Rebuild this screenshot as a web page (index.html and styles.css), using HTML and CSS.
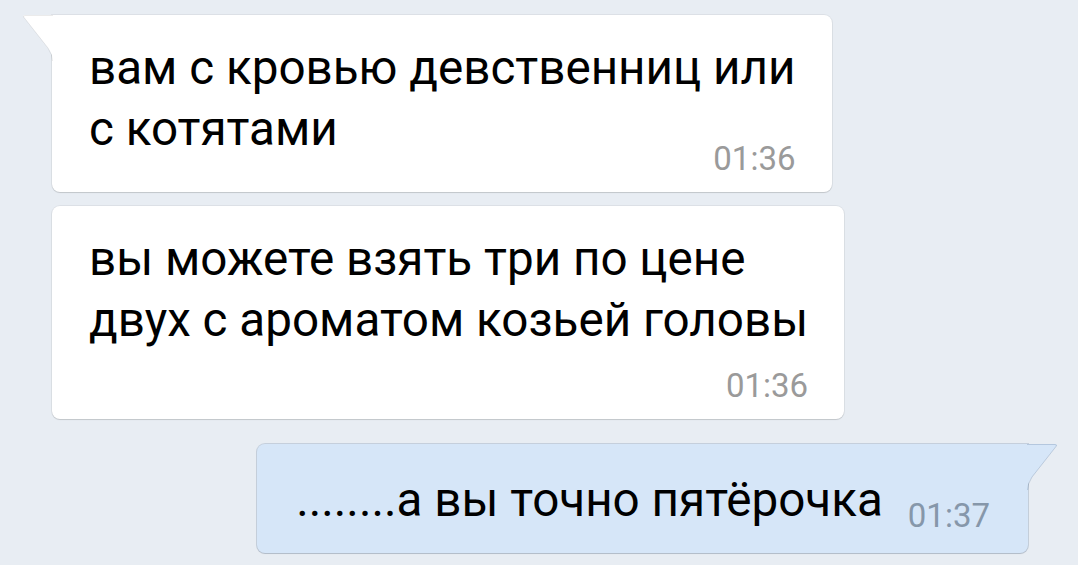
FILE: index.html
```html
<!DOCTYPE html>
<html lang="ru">
<head>
    <meta charset="UTF-8">
    <meta name="viewport" content="width=device-width, initial-scale=1.0">
    <title>Сообщения</title>
    <link rel="stylesheet" href="styles.css">
</head>
<body>
    <div class="chat">
        <div class="message in first">
            <svg class="tail" width="32" height="46" viewBox="0 0 32 46">
                <path d="M31 0 L3 0 Q0 0 2 2.5 L26 33 Q31 40 31 46 Z" fill="#ffffff"/>
                <path d="M31 0.5 L3 0.5 Q0.5 0.5 2 2.5 L26 33 Q30.5 40 30.5 46" fill="none" stroke="rgba(0,0,0,0.08)" stroke-width="1"/>
            </svg>
            <p class="text">вам с кровью девственниц или<br>с котятами</p>
            <div class="time overlap">01:36</div>
        </div>
        <div class="message in">
            <p class="text">вы можете взять три по цене<br>двух с ароматом козьей головы</p>
            <div class="time below">01:36</div>
        </div>
        <div class="message out first">
            <svg class="tail" width="32" height="46" viewBox="0 0 32 46">
                <path d="M1 0 L29 0 Q32 0 30 2.5 L6 33 Q1 40 1 46 Z" fill="#d6e6f8"/>
                <path d="M1 0.5 L29 0.5 Q31.5 0.5 30 2.5 L6 33 Q1.5 40 1.5 46" fill="none" stroke="rgba(60,90,130,0.22)" stroke-width="1"/>
            </svg>
            <p class="text">........а вы точно пятёрочка<span class="time inline">01:37</span></p>
        </div>
    </div>
</body>
</html>
```

FILE: styles.css
```css
body {
    margin: 0;
    background-color: #e8edf3;
    font-family: Roboto, "Noto Sans", sans-serif;
    color: #000000;
    height: 100vh;
    overflow: hidden;
}
.chat {
    display: flex;
    flex-direction: column;
    align-items: flex-start;
    gap: 14px;
    padding: 15px 50px 0 52px;
}
.message {
    position: relative;
    background-color: #ffffff;
    border-radius: 8px;
    padding: 23px 36px 15px 37px;
    box-shadow: 0 0 0 1px rgba(0, 0, 0, 0.05), 0 1px 1px rgba(0, 0, 0, 0.12);
}
.message.in.first {
    border-top-left-radius: 0;
}
.message.out {
    align-self: flex-end;
    margin-top: 11px;
    background-color: #d6e6f8;
    padding: 26px 38px 22px 39px;
    box-shadow: 0 0 0 1px rgba(60, 90, 130, 0.2), 0 1px 1px rgba(0, 0, 0, 0.1);
}
.message.out.first {
    border-top-right-radius: 0;
}
.tail {
    position: absolute;
    top: 0;
    display: block;
}
.message.in .tail {
    left: -30px;
}
.message.out .tail {
    right: -30px;
}
.text {
    margin: 0;
    font-size: 47.6px;
    line-height: 61px;
    white-space: nowrap;
}
.time {
    font-size: 33px;
    line-height: 36px;
    color: #9a9a9a;
    text-align: right;
}
.time.overlap {
    margin-top: -19px;
}
.time.below {
    margin-top: 17px;
}
.time.inline {
    display: inline-block;
    margin-left: 25px;
    line-height: 20px;
    vertical-align: -11px;
    color: #8697aa;
}
```
